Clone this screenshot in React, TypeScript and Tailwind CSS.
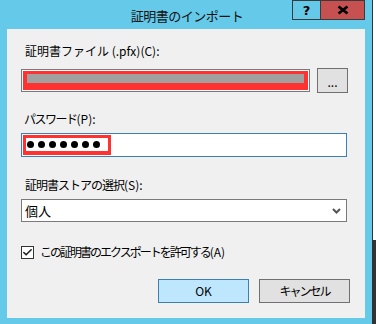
import { Check } from 'lucide-react';

const FONT = "font-['Noto_Sans_CJK_JP','Noto_Sans',sans-serif]";

const PasswordDots = () => (
  <div className="flex items-center gap-[4px] h-full pl-[1px]">
    {[...Array(7)].map((_, i) => (
      <span key={i} className="block w-[7px] h-[7px] rounded-full bg-black" />
    ))}
  </div>
);

export default function App() {
  return (
    <div className={`w-[376px] h-[324px] flex overflow-hidden ${FONT} text-black`}>
      {/* dialog window */}
      <div className="w-[372px] h-full bg-[#65c9e9] flex flex-col">
        {/* title bar */}
        <div className="relative h-[29px] flex items-center justify-center shrink-0">
          <span className="text-[13px] leading-none mt-[1px] ml-[2px] tracking-[-0.5px] text-[#111]">証明書のインポート</span>
          <div className="absolute top-0 right-[7px] flex">
            <div className="w-[28px] h-[20px] border border-[#3a3a3a] border-r-0 flex items-center justify-center text-[13px] font-bold leading-none font-['DejaVu_Sans',sans-serif]">?</div>
            <div className="w-[45px] h-[20px] bg-[#c75050] border border-[#3a3a3a] flex items-center justify-center">
              <svg width="12" height="10" viewBox="0 0 12 10">
                <path d="M1.5 1.5 L10.5 8.5 M10.5 1.5 L1.5 8.5" stroke="#000" strokeWidth="2.8" fill="none" />
              </svg>
            </div>
          </div>
        </div>

        {/* client area */}
        <div className="mx-[7px] h-[289px] bg-[#f0f0f0] pl-[14px] pr-[15px] text-[12px] flex flex-col">
          <div className="pt-[13px] leading-[18px] ml-[4px]">証明書ファイル (.pfx)(C):</div>

          <div className="mt-[8px] flex items-start gap-[7px]">
            <div className="mt-[1px] w-[289px] h-[23px] border border-[#7a7a7a] bg-white p-[1px]">
              <div className="w-full h-full bg-[#ff3131] px-[4px] pt-[3px]">
                <div className="h-[9px] bg-[#a0a0a0]" />
              </div>
            </div>
            <button className="w-[31px] h-[25px] border border-[#707070] bg-[#e1e1e1] text-[12px] leading-none flex items-center justify-center pt-[3px]">
              ...
            </button>
          </div>

          <div className="mt-[17px] leading-[18px] ml-[3px]">
            <span className="tracking-[-1.5px]">パスワード</span>(P):
          </div>

          <div className="mt-[5px] w-[326px] h-[24px] border border-[#3c7fb1] bg-white p-[1px]">
            <div className="w-[88px] h-full bg-[#ff3131] pt-[3px] pl-[3px] pr-[3px] pb-[4px]">
              <div className="h-full bg-white">
                <PasswordDots />
              </div>
            </div>
          </div>

          <div className="mt-[19px] leading-[18px] ml-[4px]">
            <span className="tracking-[-1px]">証明書ストアの選択</span>(S):
          </div>

          <div className="mt-[5px] w-[326px] h-[23px] border border-[#7a7a7a] bg-white flex items-center justify-between pl-[3px] pr-[5px]">
            <span className="text-[13px] leading-none">個人</span>
            <svg width="9" height="6" viewBox="0 0 9 6">
              <path d="M1 1 L4.5 4.5 L8 1" stroke="#555" strokeWidth="2" fill="none" />
            </svg>
          </div>

          <div className="mt-[21px] h-[18px] flex items-center gap-[6px]">
            <div className="w-[13px] h-[13px] border border-[#333] bg-white flex items-center justify-center">
              <Check size={11} strokeWidth={3.5} color="#222" />
            </div>
            <span className="leading-[18px]">
              <span className="tracking-[-2px]">この証明書のエクスポートを許可する</span>(A)
            </span>
          </div>

          <div className="mt-[18px] flex justify-end gap-[10px]">
            <button className="w-[91px] h-[24px] border border-[#3c7fb1] bg-[#bee6fd] text-[12px] leading-none">OK</button>
            <button className="w-[91px] h-[24px] border border-[#707070] bg-[#e1e1e1] text-[12px] leading-none tracking-[-2px]">キャンセル</button>
          </div>
        </div>
      </div>

      {/* edge of the window behind */}
      <div className="w-[4px] h-full flex flex-col border-l border-[#333]">
        <div className="h-[240px] bg-white" />
        <div className="flex-1 bg-[#333]" />
      </div>
    </div>
  );
}
